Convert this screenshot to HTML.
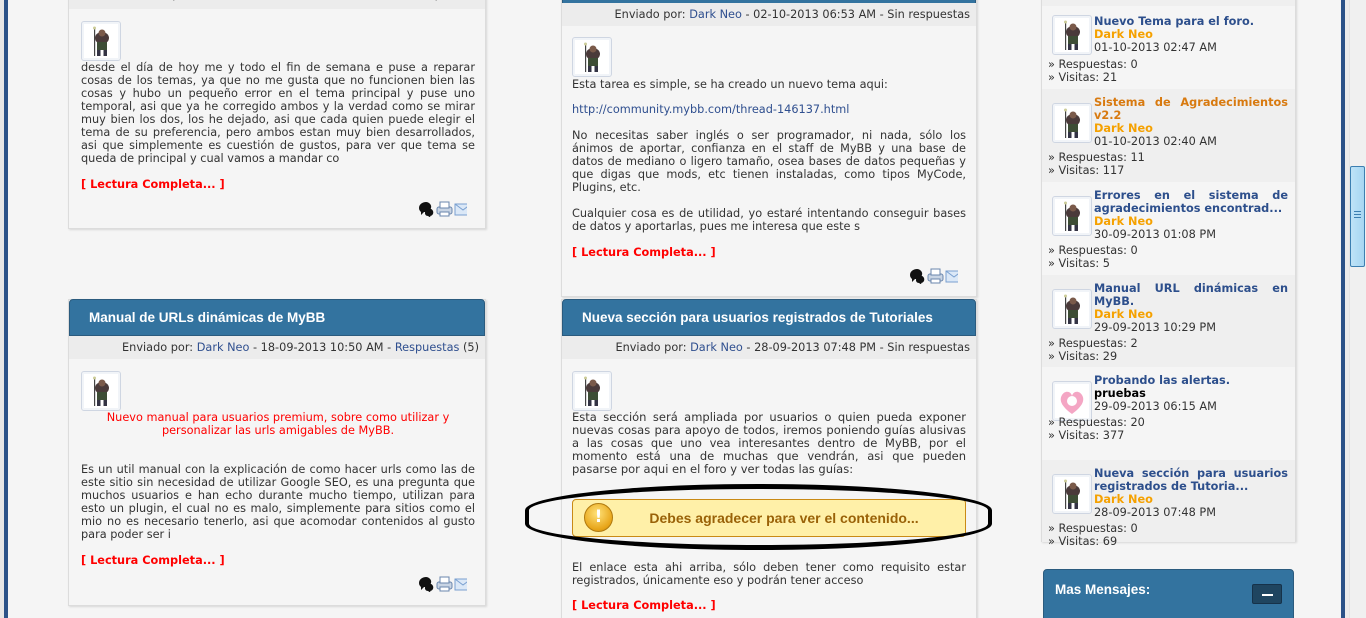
<!DOCTYPE html>
<html><head><meta charset="utf-8">
<style>
*{margin:0;padding:0;box-sizing:border-box}
html,body{width:1366px;height:618px;overflow:hidden}
body{background:#f5f5f5;font-family:"DejaVu Sans","Liberation Sans",sans-serif;font-size:11.3px;color:#333;position:relative}
.abs{position:absolute}
.box{position:absolute;background:#f5f5f5;border:1px solid #dcdcdc;box-shadow:1px 1px 2px rgba(0,0,0,.12)}
.hdr{position:absolute;left:0;right:0;height:37px;background:#33739f;border:1px solid #2b5b7e;border-radius:4px 4px 0 0;color:#fff;font-weight:bold;font-family:"Liberation Sans",sans-serif;font-size:13.5px;line-height:36px;padding-left:19px}
.meta{position:absolute;left:0;right:0;height:23px;background:#ececec;text-align:right;padding-right:6px;line-height:23px;color:#333;white-space:nowrap}
.meta a,.lnk{color:#2f4f8f;text-decoration:none}
.av{position:absolute;width:40px;height:40px;border:1px solid #cfd6e2;border-radius:3px;background:#fff;box-shadow:inset 0 0 0 2px #f1f4f8}
.txt{position:absolute;line-height:13px;text-align:justify;font-size:11.3px}
.lc{position:absolute;color:#f00;font-weight:bold;font-size:11.3px}
.ic{position:absolute;width:50px;height:16px}
.side .it{position:absolute;left:0;right:0;height:93px}
.side .t{position:absolute;left:52px;right:7px;color:#2d4f8c;font-weight:bold;line-height:13px;text-align:justify}
.side .o{color:#f5a100;font-weight:bold}
.side .d{color:#333;font-weight:normal}
.side .st{position:absolute;left:6px;line-height:13px}
</style></head><body>
<div class="abs" style="left:0;top:0;width:4px;height:618px;background:#e6e6e6"></div>
<div class="abs" style="left:4px;top:0;width:4px;height:618px;background:#2b5288"></div>
<div class="abs" style="left:1341px;top:0;width:4px;height:618px;background:#2b5288"></div>
<div class="abs" style="left:1345px;top:0;width:4px;height:618px;background:#ececec"></div>
<div class="abs" style="left:1349px;top:0;width:17px;height:618px;background:#f0f0f0;border-left:1px solid #e4e4e4"></div>
<div class="abs" style="left:1350px;top:166px;width:15px;height:101px;background:linear-gradient(90deg,#bfe3f7,#a6d6f2);border:1px solid #3c7fb1;border-radius:2px"></div>
<div class="abs" style="left:1354px;top:211px;width:7px;height:8px;background:repeating-linear-gradient(#3c7fb1 0 1px,transparent 1px 3px)"></div>

<svg width="0" height="0" style="position:absolute"><defs>
<g id="fig"><rect x="12" y="6" width="1.2" height="28" fill="#444"/><circle cx="12.5" cy="6" r="1.5" fill="#cc9"/><ellipse cx="20" cy="16" rx="7" ry="6" fill="#4a3a3a"/><circle cx="20" cy="11" r="3.5" fill="#7a5a4a"/><rect x="15" y="20" width="10" height="8" fill="#3d4d35"/><rect x="15" y="28" width="3.5" height="6" fill="#334"/><rect x="21.5" y="28" width="3.5" height="6" fill="#334"/></g>
<g id="icons"><path d="M2 7c0-4 4-6 7-6s6 3 5 6c-1 3-4 4-7 4l-3 3 0-3c-1-1-2-2-2-4z" fill="#111"/><path d="M9 9c2-2 6-2 7 1s-1 5-3 5l1 2-3-2c-3 0-4-3-2-6z" fill="#111"/><rect x="20" y="6" width="15" height="7" rx="2" fill="#c8d4e4" stroke="#6a86ad"/><rect x="23" y="1" width="9" height="6" fill="#fff" stroke="#6a86ad"/><rect x="23" y="11" width="9" height="4" fill="#fff" stroke="#6a86ad"/><rect x="38" y="3" width="16" height="11" fill="#dbe8f7" stroke="#7aa0d0"/><path d="M38 3l8 6 8-6" fill="none" stroke="#7aa0d0"/></g>
</defs></svg>

<!-- LEFT BOX 1 -->
<div class="box" style="left:68px;top:-10px;width:418px;height:239px">
  <div class="meta" style="top:0;height:18px;line-height:8px;overflow:hidden;color:#555">Enviado por: <a>Dark Neo</a> - 01-10-2013 02:47 AM - Sin respuestas</div>
  <div class="av" style="left:12px;top:30px"><svg width="38" height="38"><use href="#fig"/></svg></div>
  <div class="txt" style="left:12px;top:70px;width:394px">desde el día de hoy me y todo el fin de semana e puse a reparar cosas de los temas, ya que no me gusta que no funcionen bien las cosas y hubo un pequeño error en el tema principal y puse uno temporal, asi que ya he corregido ambos y la verdad como se mirar muy bien los dos, los he dejado, asi que cada quien puede elegir el tema de su preferencia, pero ambos estan muy bien desarrollados, asi que simplemente es cuestión de gustos, para ver que tema se queda de principal y cual vamos a mandar co</div>
  <div class="lc" style="left:12px;top:187px">[ Lectura Completa... ]</div>
  <svg class="ic" style="left:348px;top:210px" width="58" height="18"><use href="#icons"/></svg>
</div>

<!-- LEFT BOX 2 -->
<div class="box" style="left:68px;top:299px;width:418px;height:307px">
  <div class="hdr" style="top:-1px">Manual de URLs dinámicas de MyBB</div>
  <div class="meta" style="top:36px">Enviado por: <a>Dark Neo</a> - 18-09-2013 10:50 AM - <a>Respuestas</a> (5)</div>
  <div class="av" style="left:12px;top:71px"><svg width="38" height="38"><use href="#fig"/></svg></div>
  <div class="txt" style="left:12px;top:111px;width:394px;text-align:center;color:#f00">Nuevo manual para usuarios premium, sobre como utilizar y personalizar las urls amigables de MyBB.</div>
  <div class="txt" style="left:12px;top:163px;width:394px">Es un util manual con la explicación de como hacer urls como las de este sitio sin necesidad de utilizar Google SEO, es una pregunta que muchos usuarios e han echo durante mucho tiempo, utilizan para esto un plugin, el cual no es malo, simplemente para sitios como el mio no es necesario tenerlo, asi que acomodar contenidos al gusto para poder ser i</div>
  <div class="lc" style="left:12px;top:254px">[ Lectura Completa... ]</div>
  <svg class="ic" style="left:348px;top:276px" width="58" height="18"><use href="#icons"/></svg>
</div>

<!-- MIDDLE BOX 1 -->
<div class="box" style="left:561px;top:-30px;width:416px;height:327px">
  <div class="hdr" style="top:-1px;height:34px"></div>
  <div class="meta" style="top:32px">Enviado por: <a>Dark Neo</a> - 02-10-2013 06:53 AM - Sin respuestas</div>
  <div class="av" style="left:10px;top:66px"><svg width="38" height="38"><use href="#fig"/></svg></div>
  <div class="txt" style="left:10px;top:107px;width:394px">Esta tarea es simple, se ha creado un nuevo tema aqui:</div>
  <div class="txt lnk" style="left:10px;top:132px;width:394px;color:#2f4f8f">http://community.mybb.com/thread-146137.html</div>
  <div class="txt" style="left:10px;top:158px;width:394px">No necesitas saber inglés o ser programador, ni nada, sólo los ánimos de aportar, confianza en el staff de MyBB y una base de datos de mediano o ligero tamaño, osea bases de datos pequeñas y que digas que mods, etc tienen instaladas, como tipos MyCode, Plugins, etc.</div>
  <div class="txt" style="left:10px;top:236px;width:394px">Cualquier cosa es de utilidad, yo estaré intentando conseguir bases de datos y aportarlas, pues me interesa que este s</div>
  <div class="lc" style="left:10px;top:275px">[ Lectura Completa... ]</div>
  <svg class="ic" style="left:346px;top:297px" width="58" height="18"><use href="#icons"/></svg>
</div>

<!-- MIDDLE BOX 2 -->
<div class="box" style="left:561px;top:299px;width:416px;height:330px">
  <div class="hdr" style="top:-1px">Nueva sección para usuarios registrados de Tutoriales</div>
  <div class="meta" style="top:36px">Enviado por: <a>Dark Neo</a> - 28-09-2013 07:48 PM - Sin respuestas</div>
  <div class="av" style="left:10px;top:71px"><svg width="38" height="38"><use href="#fig"/></svg></div>
  <div class="txt" style="left:10px;top:111px;width:394px;font-size:11.5px">Esta sección será ampliada por usuarios o quien pueda exponer nuevas cosas para apoyo de todos, iremos poniendo guías alusivas a las cosas que uno vea interesantes dentro de MyBB, por el momento está una de muchas que vendrán, asi que pueden pasarse por aqui en el foro y ver todas las guías:</div>
  <div class="abs" style="left:10px;top:199px;width:394px;height:38px;background:#fff0a8;border:1px solid #c98a16;border-radius:4px;color:#9a6208;font-weight:bold;font-family:'Liberation Sans',sans-serif;font-size:14px;line-height:36px;text-align:center;padding-left:30px">Debes agradecer para ver el contenido...</div>
  <div class="abs" style="left:22px;top:203px;width:29px;height:29px;border-radius:50%;background:radial-gradient(circle at 45% 35%,#ffe27a,#e7a417 70%,#b97c0c);border:1px solid #b07a10;color:#fff;font-weight:bold;font-size:17px;line-height:27px;text-align:center">!</div>
  <div class="txt" style="left:10px;top:261px;width:394px">El enlace esta ahi arriba, sólo deben tener como requisito estar registrados, únicamente eso y podrán tener acceso</div>
  <div class="lc" style="left:10px;top:299px">[ Lectura Completa... ]</div>
</div>
<!-- oval -->
<div class="abs" style="left:525px;top:484px;width:467px;height:66px;border:4px solid #000;border-width:5px 4px;border-radius:50%/40%"></div>

<!-- SIDEBAR -->
<div class="box side" style="left:1041px;top:-10px;width:255px;height:552px;background:#efefef">
  <div class="it" style="top:15px;background:#f5f5f5">
    <div class="av" style="left:10px;top:9px"><svg width="38" height="38"><use href="#fig"/></svg></div>
    <div class="t" style="top:9px">Nuevo Tema para el foro.<br><span class="o">Dark Neo</span><br><span class="d">01-10-2013 02:47 AM</span></div>
    <div class="st" style="top:52px">» Respuestas: 0<br>» Visitas: 21</div>
  </div>
  <div class="it" style="top:98px;background:#efefef">
    <div class="av" style="left:10px;top:14px"><svg width="38" height="38"><use href="#fig"/></svg></div>
    <div class="t" style="top:7px;color:#d87a10">Sistema de Agradecimientos v2.2<br><span class="o">Dark Neo</span><br><span class="d">01-10-2013 02:40 AM</span></div>
    <div class="st" style="top:62px">» Respuestas: 11<br>» Visitas: 117</div>
  </div>
  <div class="it" style="top:191px;background:#f5f5f5">
    <div class="av" style="left:10px;top:14px"><svg width="38" height="38"><use href="#fig"/></svg></div>
    <div class="t" style="top:7px">Errores en el sistema de agradecimientos encontrad...<br><span class="o">Dark Neo</span><br><span class="d">30-09-2013 01:08 PM</span></div>
    <div class="st" style="top:62px">» Respuestas: 0<br>» Visitas: 5</div>
  </div>
  <div class="it" style="top:284px;background:#efefef">
    <div class="av" style="left:10px;top:14px"><svg width="38" height="38"><use href="#fig"/></svg></div>
    <div class="t" style="top:7px">Manual URL dinámicas en MyBB.<br><span class="o">Dark Neo</span><br><span class="d">29-09-2013 10:29 PM</span></div>
    <div class="st" style="top:62px">» Respuestas: 2<br>» Visitas: 29</div>
  </div>
  <div class="it" style="top:376px;background:#f5f5f5">
    <div class="av" style="left:10px;top:14px"><svg width="38" height="38"><path d="M19 32C8 24 6 18 9 13s9-4 10 1c1-5 7-6 10-1s1 11-10 19z" fill="#f4a6c4"/><circle cx="19" cy="19" r="5" fill="#fff"/></svg></div>
    <div class="t" style="top:7px">Probando las alertas.<br><span style="color:#000">pruebas</span><br><span class="d">29-09-2013 06:15 AM</span></div>
    <div class="st" style="top:49px">» Respuestas: 20<br>» Visitas: 377</div>
  </div>
  <div class="it" style="top:469px;background:#efefef;height:82px">
    <div class="av" style="left:10px;top:14px"><svg width="38" height="38"><use href="#fig"/></svg></div>
    <div class="t" style="top:7px">Nueva sección para usuarios registrados de Tutoria...<br><span class="o">Dark Neo</span><br><span class="d">28-09-2013 07:48 PM</span></div>
    <div class="st" style="top:62px">» Respuestas: 0<br>» Visitas: 69</div>
  </div>
</div>
<div class="abs" style="left:1043px;top:569px;width:251px;height:60px;background:#33739f;border:1px solid #2b5b7e;border-radius:4px 4px 0 0;color:#fff;font-weight:bold;font-family:'Liberation Sans',sans-serif;font-size:13.5px;padding:12px 0 0 11px">Mas Mensajes:</div>
<div class="abs" style="left:1252px;top:584px;width:30px;height:20px;background:#1f4560;border:1px solid #16324a;border-radius:2px"><div style="position:absolute;left:9px;top:9px;width:11px;height:2px;background:#fff"></div></div>
</body></html>
